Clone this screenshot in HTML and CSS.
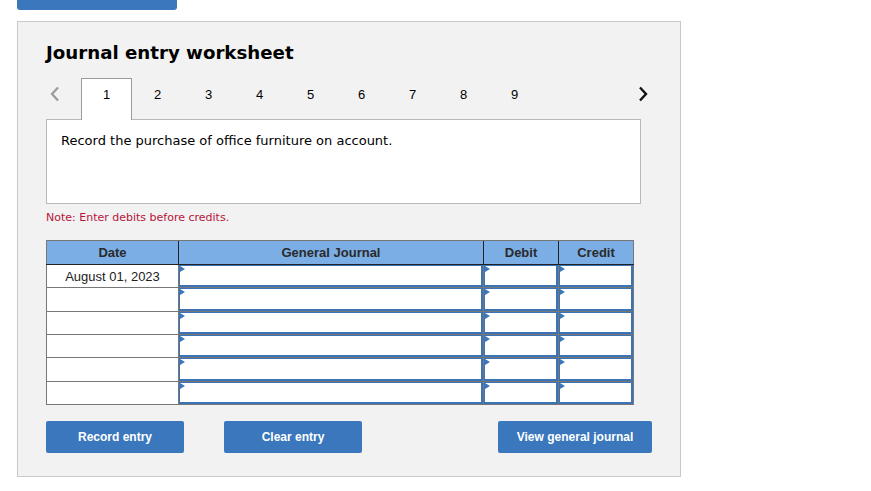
FILE: index.html
```html
<!DOCTYPE html>
<html>
<head>
<meta charset="utf-8">
<link rel="stylesheet" href="styles.css">
</head>
<body>
<div class="topbtn"></div>
<div class="panel">
  <h1 class="title">Journal entry worksheet</h1>
  <div class="tabs">
    <div class="nav prev">
      <svg width="10" height="16" viewBox="0 0 10 16"><path d="M8 1.5 L2 8 L8 14.5" fill="none" stroke="#9a9a9a" stroke-width="2.2"/></svg>
    </div>
    <div class="tab active">1</div>
    <div class="tab">2</div>
    <div class="tab">3</div>
    <div class="tab">4</div>
    <div class="tab">5</div>
    <div class="tab">6</div>
    <div class="tab">7</div>
    <div class="tab">8</div>
    <div class="tab">9</div>
    <div class="nav next">
      <svg width="10" height="16" viewBox="0 0 10 16"><path d="M2 1.5 L8 8 L2 14.5" fill="none" stroke="#111" stroke-width="2.4"/></svg>
    </div>
  </div>
  <div class="question">Record the purchase of office furniture on account.</div>
  <div class="note">Note: Enter debits before credits.</div>
  <table class="journal">
    <thead>
      <tr>
        <th class="c-date">Date</th>
        <th class="c-gj">General Journal</th>
        <th class="c-amt">Debit</th>
        <th class="c-amt">Credit</th>
      </tr>
    </thead>
    <tbody>
      <tr>
        <td class="date">August 01, 2023</td>
        <td class="in"><div class="box"></div></td>
        <td class="in"><div class="box"></div></td>
        <td class="in"><div class="box"></div></td>
      </tr>
      <tr>
        <td class="date"></td>
        <td class="in"><div class="box"></div></td>
        <td class="in"><div class="box"></div></td>
        <td class="in"><div class="box"></div></td>
      </tr>
      <tr>
        <td class="date"></td>
        <td class="in"><div class="box"></div></td>
        <td class="in"><div class="box"></div></td>
        <td class="in"><div class="box"></div></td>
      </tr>
      <tr>
        <td class="date"></td>
        <td class="in"><div class="box"></div></td>
        <td class="in"><div class="box"></div></td>
        <td class="in"><div class="box"></div></td>
      </tr>
      <tr>
        <td class="date"></td>
        <td class="in"><div class="box"></div></td>
        <td class="in"><div class="box"></div></td>
        <td class="in"><div class="box"></div></td>
      </tr>
      <tr>
        <td class="date"></td>
        <td class="in"><div class="box"></div></td>
        <td class="in"><div class="box"></div></td>
        <td class="in"><div class="box"></div></td>
      </tr>
    </tbody>
  </table>
  <div class="actions">
    <button class="btn btn-rec">Record entry</button>
    <button class="btn btn-clear">Clear entry</button>
    <button class="btn btn-view">View general journal</button>
  </div>
</div>
</body>
</html>
```
FILE: styles.css
```css
html, body {
  margin: 0;
  padding: 0;
  background: #ffffff;
}
body {
  font-family: "DejaVu Sans", Verdana, sans-serif;
  color: #000;
}
.topbtn {
  margin-left: 17px;
  width: 160px;
  height: 10px;
  background: #3a77bd;
  border-radius: 0 0 3px 3px;
}
.panel {
  margin: 11px 0 0 17px;
  width: 606px;
  padding: 0 28px 23px 28px;
  background: #f2f2f2;
  border: 1px solid #c8c8c8;
}
.title {
  margin: 19px 0 0 0;
  font-size: 18.2px;
  line-height: 24px;
  font-weight: bold;
  color: #000;
}
.tabs {
  display: flex;
  margin-top: 13px;
  height: 41px;
  align-items: flex-start;
}
.nav {
  height: 41px;
  box-sizing: border-box;
  padding-top: 8px;
}
.nav svg {
  display: block;
}
.prev {
  width: 35px;
  padding-left: 4px;
}
.next {
  margin-left: auto;
  margin-right: 4px;
  width: 10px;
}
.tab {
  width: 51px;
  height: 41px;
  box-sizing: border-box;
  text-align: center;
  font-family: "Liberation Sans", Arial, sans-serif;
  font-size: 13px;
  line-height: 16px;
  padding-top: 9px;
  color: #000;
}
.tab.active {
  background: #ffffff;
  border: 1px solid #9a9a9a;
  border-bottom: none;
  height: 42px;
  padding-top: 8px;
  position: relative;
  z-index: 1;
}
.question {
  border: 1px solid #b8b8b8;
  background: #ffffff;
  padding: 13px 14px 0 14px;
  box-sizing: border-box;
  height: 85px;
  font-size: 13px;
  line-height: 16px;
  color: #000;
  margin-right: 11px;
}
.note {
  margin-top: 7px;
  font-size: 11px;
  line-height: 14px;
  color: #b8143a;
}
.journal {
  margin-top: 15px;
  border-collapse: collapse;
  table-layout: fixed;
  font-family: "Liberation Sans", Arial, sans-serif;
  font-size: 13px;
  border: 1px solid #777777;
}
.journal th {
  background: #7aaee4;
  color: #2a2a2a;
  font-weight: bold;
  height: 23px;
  padding: 0;
  border-bottom: 1px solid #222;
  border-left: 1px solid #222;
  border-top: 1px solid #777777;
}
.journal th:first-child {
  border-left: 1px solid #777777;
}
.journal th:last-child {
  border-right: 1px solid #777777;
}
.c-date { width: 131px; }
.c-gj { width: 304px; }
.c-amt { width: 74px; }
.journal td {
  padding: 0;
  height: 22.34px;
  border: 1px solid #777777;
  background: #ffffff;
}
.journal td.date {
  text-align: center;
  color: #222;
  vertical-align: middle;
}
.journal td.in {
  position: relative;
}
.box {
  height: 22.34px;
  box-sizing: border-box;
  border-top: 1px solid #3a74b6;
  border-left: 1px solid #3a74b6;
  border-right: 2px solid #3a74b6;
  border-bottom: 2px solid #3a74b6;
  background: #fff;
}
.journal td.in::before {
  content: "";
  position: absolute;
  left: 1px;
  top: 1px;
  width: 0;
  height: 0;
  border-top: 3px solid transparent;
  border-bottom: 3px solid transparent;
  border-left: 5px solid #3a77bd;
}
.actions {
  display: flex;
  margin-top: 16px;
}
.btn {
  height: 32px;
  border: none;
  border-radius: 2px;
  background: #3a77bd;
  color: #ffffff;
  font-family: "Liberation Sans", Arial, sans-serif;
  font-weight: bold;
  font-size: 12px;
  padding: 0;
  margin: 0;
}
.btn-rec { width: 138px; }
.btn-clear { width: 138px; margin-left: 40px; }
.btn-view { width: 154px; margin-left: auto; }
```
